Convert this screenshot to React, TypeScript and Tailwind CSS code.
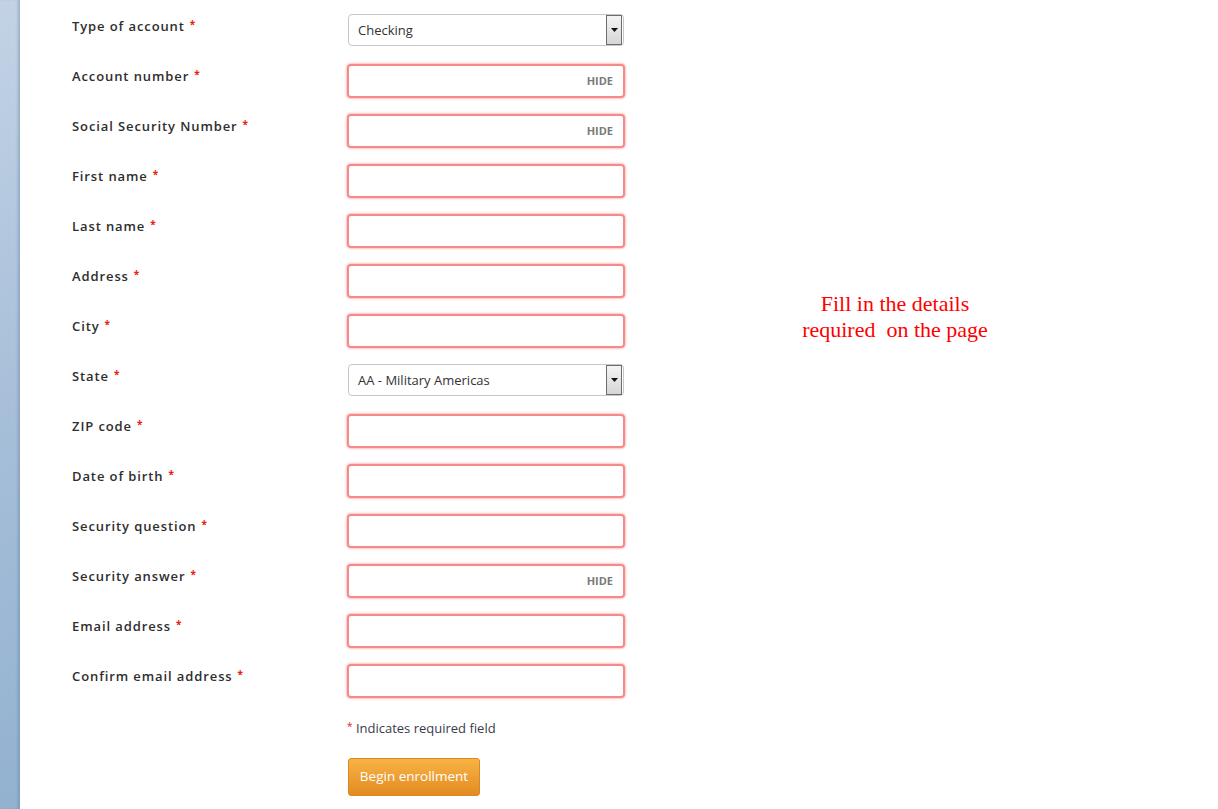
import React from "react";

type Field = { label: string; kind: "select" | "input" | "hide"; value?: string };

const fields: Field[] = [
  { label: "Type of account", kind: "select", value: "Checking" },
  { label: "Account number", kind: "hide" },
  { label: "Social Security Number", kind: "hide" },
  { label: "First name", kind: "input" },
  { label: "Last name", kind: "input" },
  { label: "Address", kind: "input" },
  { label: "City", kind: "input" },
  { label: "State", kind: "select", value: "AA - Military Americas" },
  { label: "ZIP code", kind: "input" },
  { label: "Date of birth", kind: "input" },
  { label: "Security question", kind: "input" },
  { label: "Security answer", kind: "hide" },
  { label: "Email address", kind: "input" },
  { label: "Confirm email address", kind: "input" },
];

function SelectBox({ value }: { value: string }) {
  return (
    <div className="ml-[1px] flex h-[32px] w-[276px] items-center rounded-[4px] border border-[#c6c6c6] bg-white pl-[9px] pr-[1px]">
      <span className="flex-1 pt-[1px] text-[13px] text-[#333]">{value}</span>
      <div className="flex h-[30px] w-[16px] items-center justify-center border border-[#6d6d6d] bg-gradient-to-b from-[#f4f4f4] to-[#d6d6d6]">
        <svg width="7" height="4" viewBox="0 0 7 4">
          <path d="M0 0h7L3.5 4z" fill="#111" />
        </svg>
      </div>
    </div>
  );
}

function InputBox({ hide }: { hide?: boolean }) {
  return (
    <div className="flex h-[34px] w-[278px] items-center justify-end rounded-[4px] border-2 border-[#f58a8a] bg-white pr-[10px] shadow-[0_0_2px_1px_rgba(255,120,120,0.45)]">
      {hide && <span className="text-[11px] font-bold text-[#7a7a7a]">HIDE</span>}
    </div>
  );
}

function Star() {
  return <span className="relative top-[-3px] ml-[5px] text-[10px] font-bold text-[#e8200d]">*</span>;
}

export default function App() {
  return (
    <div className="flex min-h-[809px] w-full bg-white" style={{ fontFamily: "'Open Sans', Lato, sans-serif" }}>
      <div className="w-[20px] shrink-0 bg-gradient-to-b from-[#c3d3e5] via-[#a7bfd9] to-[#93b2d0] shadow-[inset_-3px_0_3px_-1px_rgba(80,110,150,0.35)]" />
      <div className="flex pt-[14px]">
        <div className="ml-[52px]">
          {fields.map((f) => (
            <div key={f.label} className="flex h-[50px]">
              <div className="w-[275px] pt-[3px] text-[13px] font-semibold tracking-[0.9px] text-[#2e2e2e]">
                {f.label}
                <Star />
              </div>
              <div>
                {f.kind === "select" ? <SelectBox value={f.value!} /> : <InputBox hide={f.kind === "hide"} />}
              </div>
            </div>
          ))}
          <div className="ml-[275px] pt-[5px] text-[13px] text-[#3a3a4a]">
            <span className="relative top-[-3px] text-[10px] text-[#e8200d]">*</span> Indicates required field
          </div>
          <div className="ml-[276px] mt-[19px]">
            <button className="h-[38px] w-[132px] rounded-[3px] border border-[#d9891e] bg-gradient-to-b from-[#f8b343] to-[#e38b23] text-[13.5px] text-white">
              Begin enrollment
            </button>
          </div>
        </div>
        <div
          className="ml-[120px] w-[300px] pt-[277px] text-center text-[22px] leading-[26px] text-[#ff0000] whitespace-pre"
          style={{ fontFamily: "'Liberation Serif', 'Times New Roman', serif" }}
        >
          {"Fill in the details\nrequired  on the page"}
        </div>
      </div>
    </div>
  );
}
